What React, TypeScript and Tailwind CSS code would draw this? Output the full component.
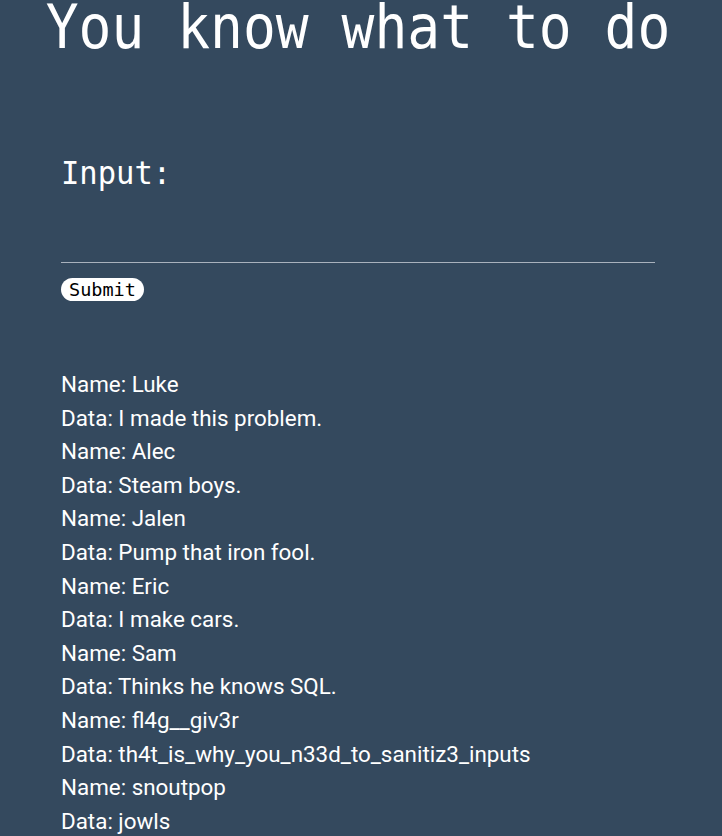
import React from "react";

const rows: [string, string][] = [
  ["Luke", "I made this problem."],
  ["Alec", "Steam boys."],
  ["Jalen", "Pump that iron fool."],
  ["Eric", "I make cars."],
  ["Sam", "Thinks he knows SQL."],
  ["fl4g__giv3r", "th4t_is_why_you_n33d_to_sanitiz3_inputs"],
  ["snoutpop", "jowls"],
];

export default function App() {
  return (
    <div className="min-h-[836px] w-full bg-[#34495e] text-white overflow-hidden">
      <h1 className="text-center pr-[6px] font-['DejaVu_Sans_Mono',monospace] text-[54.6px] leading-[64px] -mt-[8px] m-0 scale-y-110 origin-top">
        You know what to do
      </h1>
      <div className="pl-[61px] w-[655px]">
        <div className="mt-[99px] font-['DejaVu_Sans_Mono',monospace] text-[30.5px] leading-[36px] scale-y-105 origin-top">Input:</div>
        <div className="mt-[71px] h-px bg-[#a9b2bd]" />
        <button className="mt-[15px] rounded-full bg-white text-black px-[8px] h-[23px] font-['DejaVu_Sans_Mono',monospace] text-[18.5px] leading-[23px]">
          Submit
        </button>
        <div className="mt-[66px] font-['Roboto',sans-serif] text-[22.4px] leading-[33.6px]">
          {rows.map(([n, d]) => (
            <React.Fragment key={n}>
              <div>Name: {n}</div>
              <div>Data: {d}</div>
            </React.Fragment>
          ))}
        </div>
      </div>
    </div>
  );
}
